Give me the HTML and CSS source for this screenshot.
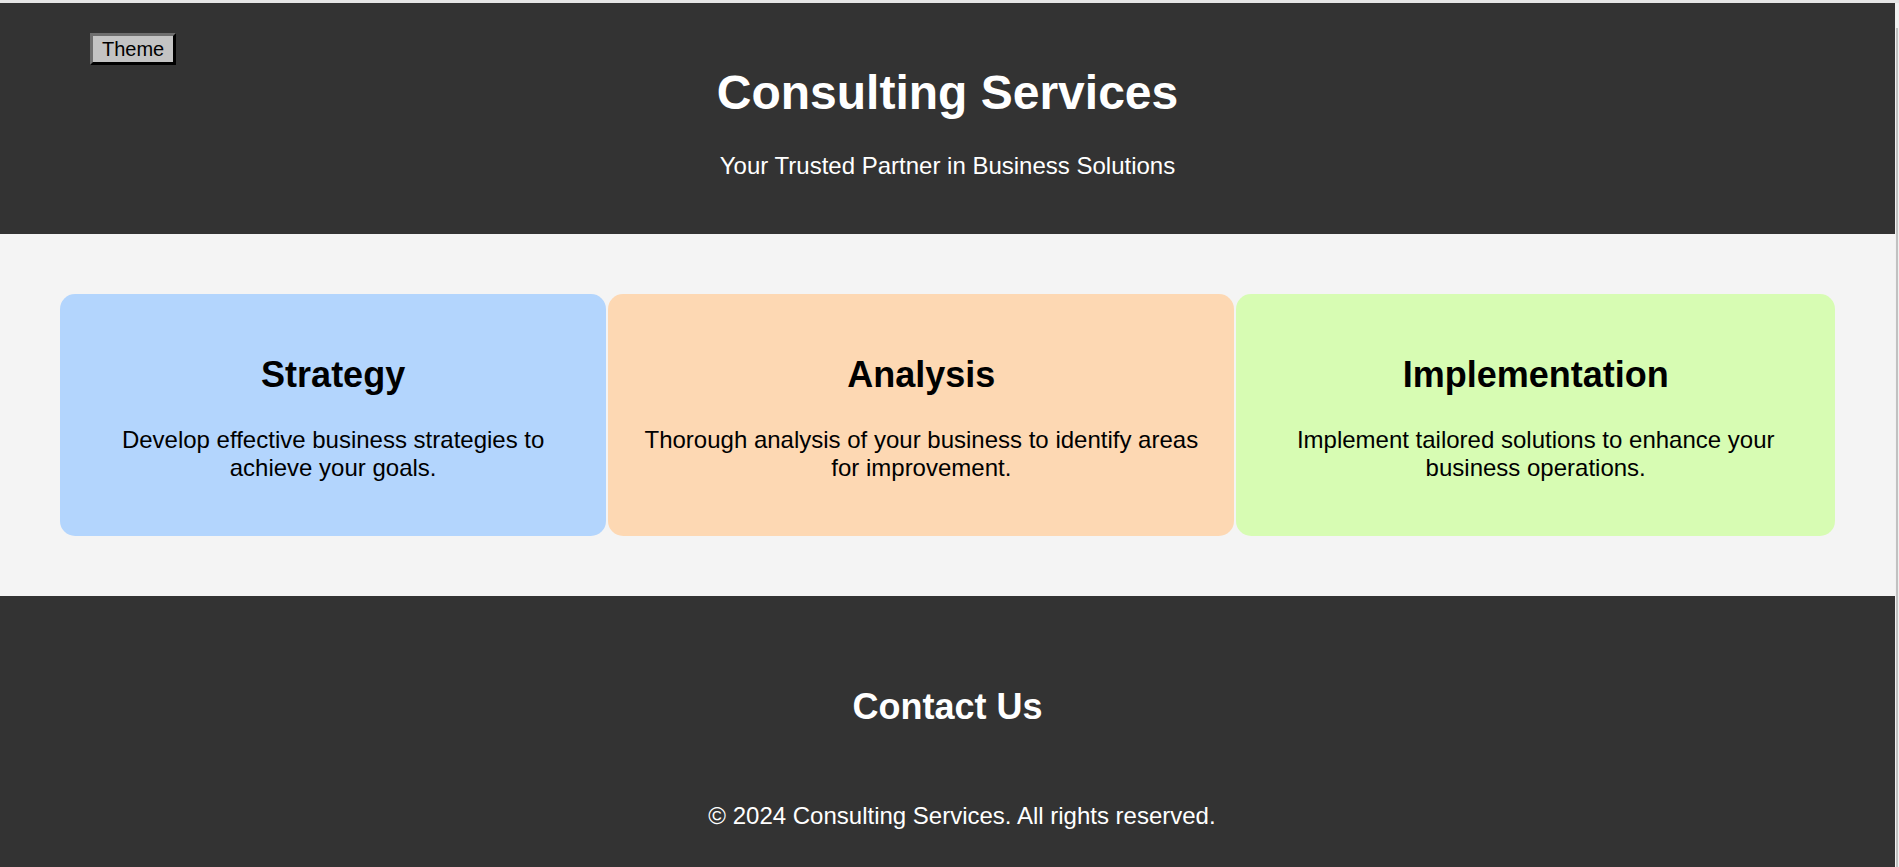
FILE: index.html
```html
<!DOCTYPE html>
<html lang="en">
<head>
<meta charset="utf-8">
<title>Consulting Services</title>
<link rel="stylesheet" href="styles.css">
</head>
<body>
<div class="page">
  <header class="site-header">
    <button class="theme-btn" type="button">Theme</button>
    <h1 class="site-title">Consulting Services</h1>
    <p class="site-tagline">Your Trusted Partner in Business Solutions</p>
  </header>
  <main class="services">
    <section class="card card-blue">
      <h2 class="card-title">Strategy</h2>
      <p class="card-text">Develop effective business strategies to achieve your goals.</p>
    </section>
    <section class="card card-peach">
      <h2 class="card-title">Analysis</h2>
      <p class="card-text">Thorough analysis of your business to identify areas for improvement.</p>
    </section>
    <section class="card card-green">
      <h2 class="card-title">Implementation</h2>
      <p class="card-text">Implement tailored solutions to enhance your business operations.</p>
    </section>
  </main>
  <footer class="site-footer">
    <section class="contact">
      <h2 class="contact-title">Contact Us</h2>
    </section>
    <p class="copyright">© 2024 Consulting Services. All rights reserved.</p>
  </footer>
</div>
<div class="scrollbar"><div class="scroll-thumb"></div></div>
</body>
</html>
```
FILE: styles.css
```css
html {
  overflow: hidden;
}

body {
  margin: 0;
  border-top: 3px solid #e6e6e6;
  display: flex;
  align-items: flex-start;
  font-family: "Liberation Sans", Arial, sans-serif;
  background: #f4f4f4;
}

.page {
  flex: 1;
  min-width: 0;
}

.scrollbar {
  width: 4px;
  height: 864px;
  background: #f1f1f1;
  display: flex;
  flex-direction: column;
  padding-top: 25px;
  box-sizing: border-box;
  align-items: center;
}

.scroll-thumb {
  width: 2px;
  flex: 1;
  background: #c1c1c1;
}

.site-header {
  position: relative;
  background: #333333;
  color: #ffffff;
  text-align: center;
  padding: 30px;
}

.theme-btn {
  position: absolute;
  top: 30px;
  left: 90px;
  font-family: "Liberation Sans", Arial, sans-serif;
  font-size: 20px;
  line-height: 24px;
  padding: 1px 9px 1px 9px;
  background: #c3c3c3;
  color: #000000;
  border-style: solid;
  border-width: 3px;
  border-color: #6e6e6e #000000 #000000 #6e6e6e;
}

.site-title {
  font-size: 48px;
  margin: 32px 0;
  font-weight: bold;
}

.site-tagline {
  font-size: 24px;
  margin: 24px 0;
}

.services {
  display: flex;
  gap: 2px;
  padding: 60px;
  background: #f4f4f4;
}

.card {
  flex: 1 1 auto;
  padding: 30px;
  border-radius: 15px;
  text-align: center;
  color: #000000;
}

.card-blue { background: #b3d5fd; }
.card-peach { background: #fdd8b3; }
.card-green { background: #d7fcb3; }

.card-title {
  font-size: 36px;
  margin: 30px 0;
}

.card-text {
  font-size: 24px;
  margin: 24px 0;
}

.site-footer {
  background: #333333;
  color: #ffffff;
  text-align: center;
  padding: 30px;
}

.contact {
  padding: 30px 30px 20px;
}

.contact-title {
  font-size: 36px;
  margin: 30px 0;
}

.copyright {
  font-size: 24px;
  margin: 24px 0;
  padding-left: 29px;
}
```
